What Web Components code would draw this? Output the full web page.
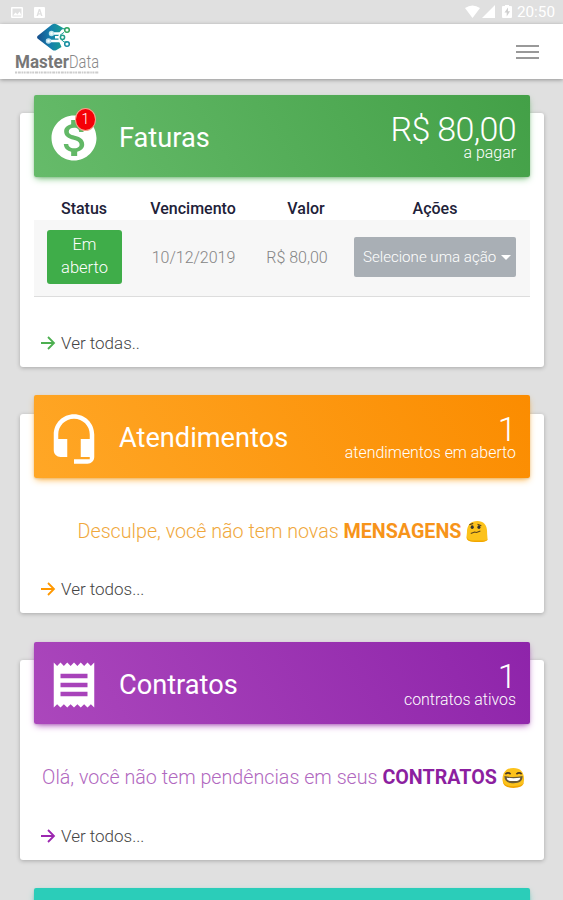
<!DOCTYPE html>
<html lang="pt-BR">
<head>
<meta charset="utf-8">
<title>MasterData</title>
<style>
    body {
        margin: 0;
        height: 900px;
        overflow: hidden;
        background: #e0e0e0;
        font-family: Roboto, "Liberation Sans", sans-serif;
        font-weight: 300;
    }

    main {
        display: flex;
        flex-direction: column;
        gap: 47px;
        height: 821px;
        overflow: hidden;
        box-sizing: border-box;
        padding: 34px 19px 0 20px;
    }
</style>
</head>
<body>
    <status-bar>20:50</status-bar>
    <top-nav></top-nav>
    <main>
        <info-card name="Faturas" icon="money" badge="1" value="R$ 80,00" caption="a pagar" link="Ver todas.."
            style="--from: #66bb6a; --to: #43a047; --accent: #4caf50; --body: 153.5px">
            <invoice-table status="Em aberto" due="10/12/2019" amount="R$ 80,00">Selecione uma ação</invoice-table>
        </info-card>
        <info-card name="Atendimentos" icon="headset" value="1" caption="atendimentos em aberto" link="Ver todos..."
            style="--from: #ffa726; --to: #fb8c00; --accent: #ff9800">
            <card-message mood="confused" style="--light: #f0a83c; --strong: #f7941a">Desculpe, você não tem novas <b>MENSAGENS</b></card-message>
        </info-card>
        <info-card name="Contratos" icon="receipt" value="1" caption="contratos ativos" link="Ver todos..."
            style="--from: #ab47bc; --to: #8e24aa; --accent: #9c27b0">
            <card-message mood="happy" style="--light: #b168c0; --strong: #8c1fa0">Olá, você não tem pendências em seus <b>CONTRATOS</b></card-message>
        </info-card>
        <info-card style="--from: #2bcdb9; --to: #2bcdb9"></info-card>
    </main>

<script>
const ICONS = {
    money: '<path d="M12 2C6.48 2 2 6.48 2 12s4.48 10 10 10 10-4.48 10-10S17.52 2 12 2zm1.41 16.09V20h-2.67v-1.93c-1.71-.36-3.16-1.46-3.27-3.4h1.96c.1 1.05.82 1.87 2.65 1.87 1.96 0 2.4-.98 2.4-1.59 0-.83-.44-1.61-2.67-2.14-2.48-.6-4.18-1.62-4.18-3.67 0-1.72 1.39-2.84 3.11-3.21V4h2.67v1.95c1.86.45 2.79 1.86 2.85 3.39H14.3c-.05-1.11-.64-1.87-2.22-1.87-1.5 0-2.4.68-2.4 1.64 0 .84.65 1.39 2.67 1.91s4.18 1.39 4.18 3.91c-.01 1.83-1.38 2.83-3.12 3.16z"/>',
    headset: '<path d="M12 1c-4.97 0-9 4.03-9 9v7c0 1.66 1.34 3 3 3h3v-8H5v-2c0-3.87 3.13-7 7-7s7 3.13 7 7v2h-4v8h4v1h-7v2h6c1.66 0 3-1.34 3-3V10c0-4.97-4.03-9-9-9z"/>',
    receipt: '<path d="M18 17H6v-2h12v2zm0-4H6v-2h12v2zm0-4H6V7h12v2zM3 22l1.5-1.5L6 22l1.5-1.5L9 22l1.5-1.5L12 22l1.5-1.5L15 22l1.5-1.5L18 22l1.5-1.5L21 22V2l-1.5 1.5L18 2l-1.5 1.5L15 2l-1.5 1.5L12 2l-1.5 1.5L9 2 7.5 3.5 6 2 4.5 3.5 3 2v20z"/>'
};

const FACES = {
    confused: `
        <path d="M1 13C1 5 5 1 12 1c6 0 10 4 10 11 0 4 .5 6 .5 8 0 2-3 2.5-10.5 2.5S.5 22 .5 18z" fill="#fcc21b"/>
        <path d="M1 17c0 4 3 4.5 11 4.5s10-.5 10.5-2c0 2.5-3 3.5-10.5 3.5S0 22 1 17z" fill="#f2a600"/>
        <ellipse cx="6.5" cy="7.5" rx="1.6" ry="1.9" fill="#333"/>
        <ellipse cx="13.5" cy="7.5" rx="1.6" ry="1.9" fill="#333"/>
        <path d="M3.5 5l4-1.5M12 4.5l4 1.5M5 14l4-1.5 2 .5 4-1.5" fill="none" stroke="#5a421c" stroke-width="1.2"/>`,
    happy: `
        <path d="M.5 14C.5 6 5 2 12 2s11 4 11 12c0 6-5 8-11 8S.5 20 .5 14z" fill="#fcc21b"/>
        <path d="M1 16c1 4 5 5 11 5s10-1 11-5c0 5-5 7-11 7S1 21 1 16z" fill="#f2a600"/>
        <path d="M3.5 8.5q3-2.5 5.5 0M15 8.5q3-2.5 5.5 0" fill="none" stroke="#4b3a22" stroke-width="1.7"/>
        <path d="M2.5 10.5q9.5 2 19 0c0 5-3 7.500-9.500 7.500s-9.500-2.500-9.500-7.500z" fill="#695a36"/>
        <path d="M5 12.200q7 1 14 0c0 2.500-1.500 3.500-7 3.500s-7-1-7-3.500z" fill="#fff"/>`
};

class StatusBar extends HTMLElement {
    constructor() {
        super();
        this.attachShadow({ mode: 'open' });
        this.shadowRoot.innerHTML = `
            <style>
                :host {
                    display: flex;
                    justify-content: space-between;
                    height: 24px;
                    padding: 0 8px 0 10px;
                    box-sizing: border-box;
                    background: #e0e0e0;
                    color: #fff;
                    font-size: 15.3px;
                    font-weight: 400;
                    line-height: 25px;
                }
                div { display: flex; align-items: center; }
                svg { display: block; fill: #fff; }
            </style>
            <div>
                <svg width="36" height="24" viewBox="0 0 36 24">
                    <path fill-rule="evenodd" d="M2 7h10q1 0 1 1v9q0 1-1 1H2q-1 0-1-1V8q0-1 1-1zm.5 1.5v8h9v-8zM3 15.5l2.5-3 2 2 2-3 2 4zM25 7h9q1 0 1 1v9q0 1-1 1h-9q-1 0-1-1V8q0-1 1-1zm1.5 9h1.5l.5-1.5h2l.5 1.5h1.5l-2.3-7h-1.4zm2.3-2.7.7-2.3.7 2.3z"/>
                </svg>
            </div>
            <div>
                <svg width="52" height="24" viewBox="0 0 52 24">
                    <path d="M0 8q7.500-5 15 0l-7.500 10zM17 18 30 5v13zM38 6h2V5h4v1h2q1 0 1 1v10q0 1-1 1h-8q-1 0-1-1V7q0-1 1-1z"/>
                    <path d="M43 7.500l-3.500 5h2.200v4l3.300-5.300h-2z" fill="#cfcfcf"/>
                </svg>
                <slot></slot>
            </div>
        `;
    }
}

class TopNav extends HTMLElement {
    constructor() {
        super();
        this.attachShadow({ mode: 'open' });
        this.shadowRoot.innerHTML = `
            <style>
                :host {
                    display: flex;
                    justify-content: space-between;
                    align-items: center;
                    height: 55px;
                    padding: 0 24px 0 14px;
                    box-sizing: border-box;
                    background: #fff;
                    box-shadow: 0 1px 4px rgba(0, 0, 0, .35);
                }
                svg { display: block; overflow: visible; }
                .menu { display: grid; gap: 4px; width: 23px; }
                .menu i { height: 2px; background: #999; }
            </style>
            <svg width="96" height="55" viewBox="14 24 96 55">
                <defs>
                    <linearGradient id="blue">
                        <stop offset="0" stop-color="#174e8c"/>
                        <stop offset=".5" stop-color="#147fae"/>
                        <stop offset="1" stop-color="#19a18e"/>
                    </linearGradient>
                </defs>
                <path d="M37.5 36 52 24.5q2.500-1.500 5 0L64 28.500 58.500 35v5l3 7-5 3q-2 1-4 0L37.500 38.500q-1-1.200 0-2.500z" fill="url(#blue)"/>
                <path d="M51 33.500h9l3-3.500h3M55 37.300h7M48 41h12l3 3h3" fill="none" stroke="#fff" stroke-width="2.400"/>
                <g fill="#f4fffd" stroke-width="1.500">
                    <circle cx="67" cy="30" r="2.300" stroke="#31a35c"/>
                    <circle cx="51.500" cy="33.500" r="2" stroke="#bfe6ec"/>
                    <circle cx="62.500" cy="37.300" r="2.100" stroke="#229f8b"/>
                    <circle cx="48.500" cy="41" r="2" stroke="#bfe0ee"/>
                    <circle cx="67" cy="44" r="2.300" stroke="#168ba3"/>
                </g>
                <path d="M61 28.800h4M60 35.300l4-3M61 39.300l3 2.700h3" fill="none" stroke="#1c9c97" stroke-width="1"/>
                <text x="15" y="67.500" font-size="18" font-weight="700" fill="#777" textLength="54" lengthAdjust="spacingAndGlyphs">Master</text>
                <text x="69" y="67.500" font-size="18" font-weight="300" fill="#888" textLength="30" lengthAdjust="spacingAndGlyphs">Data</text>
                <path d="M15 72.500h84" stroke="#ccc" stroke-width="2" stroke-dasharray="2 .8 3 .7 1.500 .6"/>
            </svg>
            <div class="menu"><i></i><i></i><i></i></div>
        `;
    }
}

class InfoCard extends HTMLElement {
    constructor() {
        super();
        this.attachShadow({ mode: 'open' });
        this.shadowRoot.innerHTML = `
            <style>
                :host {
                    display: block;
                    flex: none;
                    border-radius: 3px;
                    background: #fff;
                    box-shadow: 0 1px 4px rgba(0, 0, 0, .25);
                }
                header {
                    display: flex;
                    align-items: center;
                    position: relative;
                    top: -18.5px;
                    height: 82.5px;
                    margin: 0 14px -18.5px;
                    padding: 0 14px;
                    box-sizing: border-box;
                    border-radius: 2px;
                    background: linear-gradient(60deg, var(--from), var(--to));
                    box-shadow: 0 3px 7px -2px var(--from), 0 1px 2px rgba(0, 0, 0, .15);
                    color: #fff;
                }
                .icon { position: relative; width: 54px; height: 54px; margin: 5px 18px 0 -1px; }
                .icon svg { display: block; fill: #fff; }
                .badge {
                    position: absolute;
                    top: -3px;
                    left: 28px;
                    width: 21px;
                    height: 23px;
                    border: 1px solid #f3a28c;
                    border-radius: 50%;
                    box-sizing: border-box;
                    background: #f50007;
                    font-size: 14px;
                    line-height: 21px;
                    text-align: center;
                }
                h3 { flex: 1; margin: 4px 0 0; font-size: 27.2px; font-weight: 400; line-height: 32px; }
                .total { display: grid; text-align: right; }
                .value { font-size: 34px; line-height: 34px; letter-spacing: -.65px; }
                .caption { font-size: 15.9px; line-height: 14px; }
                .body { height: var(--body, 99.5px); }
                footer {
                    display: flex;
                    align-items: flex-start;
                    gap: 5px;
                    height: 36px;
                    padding-left: 20px;
                    box-sizing: border-box;
                    color: #444;
                    font-size: 17px;
                    line-height: 24px;
                }
                footer svg { margin-top: 4px; stroke: var(--accent); stroke-width: 1.8; fill: none; }
            </style>
            <header>
                <div class="icon"></div>
                <h3></h3>
                <div class="total"><span class="value"></span><span class="caption"></span></div>
            </header>
            <div class="body"><slot></slot></div>
            <footer>
                <svg width="16" height="16"><path d="M1 8h13M8 2l6 6-6 6"/></svg>
                <span class="link"></span>
            </footer>
        `;
    }

    connectedCallback() {
        const root = this.shadowRoot;
        const icon = this.getAttribute('icon');
        const badge = this.getAttribute('badge');
        root.querySelector('h3').textContent = this.getAttribute('name');
        root.querySelector('.value').textContent = this.getAttribute('value');
        root.querySelector('.caption').textContent = this.getAttribute('caption');
        root.querySelector('.link').textContent = this.getAttribute('link');
        if (icon) {
            root.querySelector('.icon').innerHTML =
                `<svg width="54" height="54" viewBox="0 0 24 24">${ICONS[icon]}</svg>` +
                (badge ? `<span class="badge">${badge}</span>` : '');
        }
    }
}

class InvoiceTable extends HTMLElement {
    constructor() {
        super();
        this.attachShadow({ mode: 'open' });
        this.shadowRoot.innerHTML = `
            <style>
                :host { display: block; padding: 20px 14px 0; font-size: 16px; }
                .row {
                    display: grid;
                    grid-template-columns: 101px 117px 102px 1fr;
                    align-items: center;
                    justify-items: center;
                }
                .head { height: 23px; color: #212138; font-weight: 500; }
                .head span { margin-right: 1px; }
                .head span:nth-child(3) { margin: 0 0 0 6px; }
                .head span:last-child { margin-right: 14px; }
                .data {
                    height: 77px;
                    padding-bottom: 2px;
                    box-sizing: border-box;
                    border-bottom: 1px solid #ddd;
                    background: #f7f7f7;
                    color: #858585;
                }
                .status {
                    width: 75px;
                    height: 54px;
                    padding: 3px 10px;
                    box-sizing: border-box;
                    border-radius: 3px;
                    background: #3fad49;
                    color: #fff;
                    font-size: 16.5px;
                    line-height: 23px;
                    text-align: center;
                }
                .amount { margin-right: 12px; }
                .action {
                    display: flex;
                    align-items: center;
                    justify-content: space-between;
                    width: 162px;
                    height: 40px;
                    margin-right: 14px;
                    padding: 0 5px 0 9px;
                    box-sizing: border-box;
                    border-radius: 2px;
                    background: #a9afb5;
                    color: #fff;
                    font-size: 15.1px;
                    white-space: nowrap;
                }
                .action::after { content: ""; border: 5px solid transparent; border-top-color: #fff; border-bottom: 0; }
            </style>
            <div class="row head"><span>Status</span><span>Vencimento</span><span>Valor</span><span>Ações</span></div>
            <div class="row data">
                <span class="status"></span><span class="due"></span><span class="amount"></span>
                <span class="action"><slot></slot></span>
            </div>
        `;
    }

    connectedCallback() {
        for (const field of ['status', 'due', 'amount']) {
            this.shadowRoot.querySelector('.' + field).textContent = this.getAttribute(field);
        }
    }
}

class CardMessage extends HTMLElement {
    constructor() {
        super();
        this.attachShadow({ mode: 'open' });
        this.shadowRoot.innerHTML = `
            <style>
                :host {
                    display: flex;
                    justify-content: center;
                    gap: 5px;
                    padding: 42px 0 0 3px;
                    color: var(--light);
                    font-size: 19.7px;
                    line-height: 24px;
                    white-space: nowrap;
                }
                ::slotted(b) { color: var(--strong); font-weight: 700; }
                svg { display: block; }
            </style>
            <span><slot></slot></span>
            <svg width="23" height="23" viewBox="0 0 24 24"></svg>
        `;
    }

    connectedCallback() {
        this.shadowRoot.querySelector('svg').innerHTML = FACES[this.getAttribute('mood')];
    }
}

customElements.define('status-bar', StatusBar);
customElements.define('top-nav', TopNav);
customElements.define('info-card', InfoCard);
customElements.define('invoice-table', InvoiceTable);
customElements.define('card-message', CardMessage);
</script>
</body>
</html>
